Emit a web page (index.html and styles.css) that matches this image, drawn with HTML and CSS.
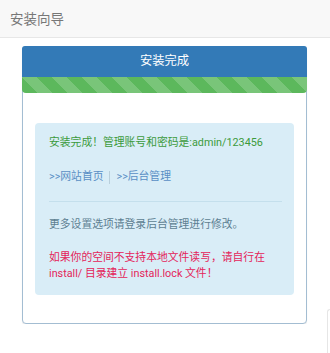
FILE: index.html
```html
<!DOCTYPE html>
<html lang="zh-CN">
<head>
<meta charset="utf-8">
<title>安装向导</title>
<link rel="stylesheet" href="styles.css">
</head>
<body>
<div class="topbar"><span class="brand">安装向导</span></div>
<div class="main">
  <div class="panel">
    <div class="panel-heading">安装完成</div>
    <div class="progress"></div>
    <div class="panel-body">
      <div class="alert">
        <p class="success">安装完成！管理账号和密码是:admin/123456</p>
        <p class="links"><a href="#">&gt;&gt;网站首页</a><span class="sep"></span><a href="#">&gt;&gt;后台管理</a></p>
        <hr class="divider">
        <p class="info">更多设置选项请登录后台管理进行修改。</p>
        <p class="warn">如果你的空间不支持本地文件读写，请自行在 install/ 目录建立 install.lock 文件！</p>
      </div>
    </div>
  </div>
</div>
<div class="corner"></div>
</body>
</html>
```

FILE: styles.css
```css
html, body {
  margin: 0;
  padding: 0;
  background: #fff;
  font-family: Roboto, "Noto Sans CJK SC", sans-serif;
}
.topbar {
  height: 38px;
  box-sizing: border-box;
  background: #f8f8f8;
  border-bottom: 1px solid #e7e7e7;
  display: flex;
  align-items: center;
  padding-left: 10px;
}
.brand {
  font-size: 13.5px;
  color: #777;
  line-height: 18px;
}
.main {
  padding: 8px 22px 0 22px;
}
.panel {
  width: 285px;
  box-sizing: border-box;
  border: 1px solid #a3bdd2;
  border-radius: 4px;
  box-shadow: 0 1px 1px rgba(0,0,0,0.08);
  background: #fff;
}
.panel-heading {
  background: #337ab7;
  color: #fff;
  font-size: 12.3px;
  height: 31px;
  line-height: 31px;
  text-align: center;
  border-radius: 3px 3px 0 0;
  margin: -1px -1px 0 -1px;
}
.progress {
  height: 16px;
  margin: 0 -1px;
  border-radius: 0 0 4px 4px;
  background-color: #5cb85c;
  background-image: linear-gradient(45deg, rgba(255,255,255,.18) 25%, transparent 25%, transparent 50%, rgba(255,255,255,.18) 50%, rgba(255,255,255,.18) 75%, transparent 75%, transparent);
  background-size: 30px 30px;
}
.panel-body {
  padding: 30px 12px 28px 12px;
}
.alert {
  background: #d9edf7;
  border-radius: 4px;
  padding: 11px 12px 13px 14px;
  font-size: 10.8px;
  line-height: 18px;
}
.alert p {
  margin: 0;
}
.success {
  color: #3c9b3c;
}
.links {
  margin-top: 16px !important;
  display: flex;
  align-items: center;
}
.links a {
  color: #5a8fc5;
  text-decoration: none;
}
.sep {
  display: inline-block;
  width: 1px;
  height: 13px;
  background: #b9cfdc;
  margin: 0 6px;
}
.divider {
  border: 0;
  border-top: 1px solid #c4dfec;
  margin: 15px 0 14px 0;
}
.info {
  color: #5d7f92;
}
.warn {
  color: #e4245a;
  line-height: 16px;
  margin-top: 16px !important;
}
.corner {
  position: absolute;
  left: 327px;
  top: 309px;
  width: 3px;
  height: 44px;
  box-sizing: border-box;
  border-left: 1px solid #e6e6e6;
  border-top: 1px solid #e6e6e6;
  border-top-left-radius: 3px;
  background: #fff;
}
```
